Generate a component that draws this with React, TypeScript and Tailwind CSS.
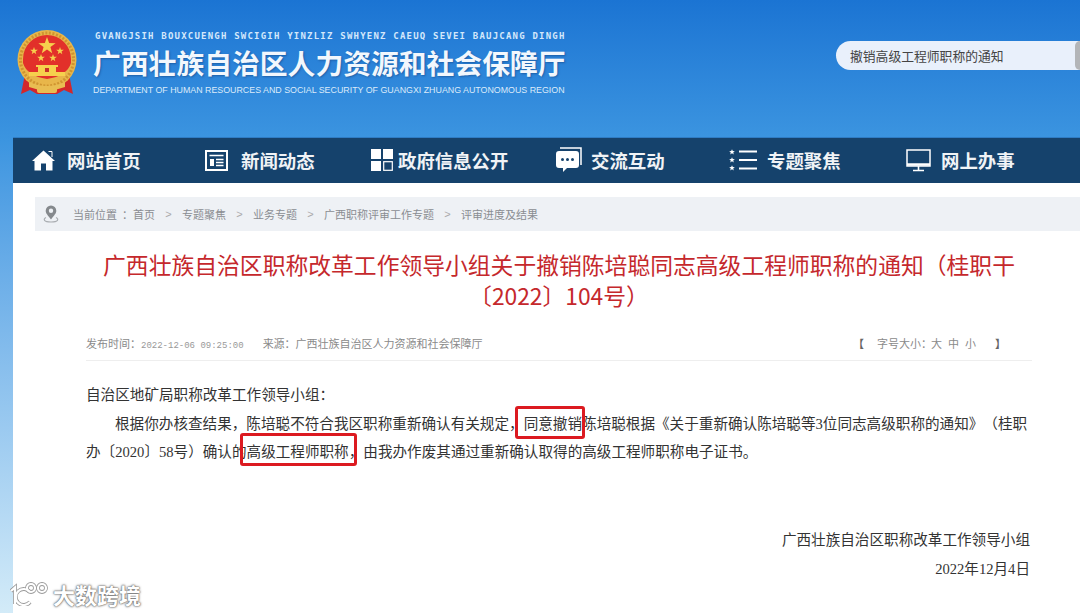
const cjk = "font-['Noto_Sans_CJK_SC','Liberation_Sans',sans-serif]";

function Emblem() {
  const star = "M0 -5 L1.2 -1.6 L4.8 -1.5 L1.9 0.6 L2.9 4 L0 2 L-2.9 4 L-1.9 0.6 L-4.8 -1.5 L-1.2 -1.6 Z";
  return (
    <svg width="64" height="67" viewBox="0 0 64 67" className="shrink-0 blur-[0.4px]">
      <path d="M10 44 L6 64 L15 60 L22 64 L42 64 L49 60 L58 64 L54 44 Z" fill="#d3272b" />
      <circle cx="32" cy="29.5" r="29.5" fill="#e8b64a" />
      <circle cx="32" cy="29.5" r="26.5" fill="none" stroke="#cf9430" strokeWidth="3" strokeDasharray="2 1.6" />
      <path d="M8 29 A24 24 0 0 1 56 29 L56 33 Q52 46 32 49 Q12 46 8 33 Z" fill="#e2302a" />
      <g fill="#f6d04d">
        <path d={star} transform="translate(32 16) scale(1.8)" />
        <path d={star} transform="translate(19 21) scale(0.8)" />
        <path d={star} transform="translate(45 21) scale(0.8)" />
        <path d={star} transform="translate(26 28) scale(0.8)" />
        <path d={star} transform="translate(38 28) scale(0.8)" />
        <rect x="21" y="35" width="22" height="2" />
        <rect x="23" y="37" width="18" height="5" />
        <rect x="14" y="42" width="36" height="4" />
      </g>
      <rect x="30" y="38" width="4" height="4" fill="#c8302a" />
      <path d="M14 52 Q32 60 50 52 L50 57 Q32 64 14 57 Z" fill="#e9bd52" />
      <rect x="22" y="57" width="20" height="6" rx="2" fill="#e9bd52" />
    </svg>
  );
}

function HomeIcon() {
  return (
    <svg width="23" height="21" viewBox="0 0 23 21" fill="#fff">
      <path d="M11.5 0.5 L23 11 L20.5 11 L20.5 20.5 L14 20.5 L14 13.5 L9 13.5 L9 20.5 L2.5 20.5 L2.5 11 L0 11 Z" />
      <path d="M16.5 1.5 H20 V7" fill="none" stroke="#fff" strokeWidth="1" />
    </svg>
  );
}

function NewsIcon() {
  return (
    <svg width="23" height="21" viewBox="0 0 23 21" fill="none" stroke="#fff">
      <rect x="1" y="1" width="21" height="19" strokeWidth="2" />
      <path d="M4.5 5.5H18.5M11 9.5H18.5M11 12.5H18.5M11 15.5H18.5" strokeWidth="1.6" />
      <rect x="5" y="9" width="4" height="7" fill="#fff" stroke="none" />
    </svg>
  );
}

function GridIcon() {
  return (
    <svg width="22" height="22" viewBox="0 0 22 22" fill="#fff">
      <rect x="0" y="0" width="10" height="10" />
      <rect x="12" y="0" width="10" height="10" />
      <rect x="0" y="12" width="10" height="10" />
      <rect x="12.7" y="12.7" width="8.6" height="8.6" fill="none" stroke="#fff" strokeWidth="1.2" />
    </svg>
  );
}

function ChatIcon() {
  return (
    <svg width="27" height="26" viewBox="0 0 27 26">
      <path d="M4 1 H25 V18" fill="none" stroke="#fff" strokeWidth="1.5" />
      <path d="M3 4 H20 Q23 4 23 7 V18 Q23 21 20 21 H11 L7 25 L7 21 H3 Q0 21 0 18 V7 Q0 4 3 4 Z" fill="#fff" />
      <circle cx="6.5" cy="12.5" r="1.5" fill="#15426c" />
      <circle cx="11.5" cy="12.5" r="1.5" fill="#15426c" />
      <circle cx="16.5" cy="12.5" r="1.5" fill="#15426c" />
    </svg>
  );
}

function ListIcon() {
  const star = "M0 -2.8 L0.8 -0.9 L2.8 -0.8 L1.2 0.5 L1.8 2.5 L0 1.3 L-1.8 2.5 L-1.2 0.5 L-2.8 -0.8 L-0.8 -0.9 Z";
  return (
    <svg width="28" height="22" viewBox="0 0 28 22" fill="#fff">
      <path d={star} transform="translate(3 3)" />
      <path d={star} transform="translate(3 11)" />
      <path d={star} transform="translate(3 19)" />
      <rect x="10" y="1.5" width="18" height="2" />
      <rect x="10" y="10" width="18" height="2" />
      <rect x="10" y="18.5" width="18" height="2" />
    </svg>
  );
}

function MonitorIcon() {
  return (
    <svg width="25" height="23" viewBox="0 0 25 23" fill="none" stroke="#fff">
      <rect x="1" y="1" width="23" height="16" strokeWidth="1.5" />
      <path d="M1 15.5H24" strokeWidth="2.5" />
      <path d="M12.5 17V21M7 21.5H18" strokeWidth="1.6" />
    </svg>
  );
}

function PinIcon() {
  return (
    <svg width="16" height="18" viewBox="0 0 16 18" fill="none" className="shrink-0">
      <path d="M3 12.5 C0 14 0.5 17 8 17 C15.5 17 16 14 13 12.5" stroke="#a9adb1" strokeWidth="1.2" />
      <path d="M8 14.5 C5 10.5 2.7 8.5 2.7 5.8 A5.3 5.3 0 0 1 13.3 5.8 C13.3 8.5 11 10.5 8 14.5 Z M8 3.6 A2.2 2.2 0 1 0 8 8 A2.2 2.2 0 1 0 8 3.6 Z" fill="#85898d" fillRule="evenodd" />
    </svg>
  );
}

function WatermarkLogo() {
  const shapes = (
    <>
      <path d="M1 9 L5 5.5 V22" />
      <path d="M20 10 A8 8 0 1 0 20 20" />
      <circle cx="21" cy="6" r="4" />
      <circle cx="32" cy="6" r="4" />
    </>
  );
  return (
    <svg width="40" height="24" viewBox="0 0 40 24" fill="none">
      <g stroke="#9a9a9a" strokeWidth="3.8">{shapes}</g>
      <g stroke="#fff" strokeWidth="2.2">{shapes}</g>
    </svg>
  );
}

const navItems = [
  { label: "网站首页", width: "w-[173px]", gap: "gap-[12px]", icon: <HomeIcon /> },
  { label: "新闻动态", width: "w-[166px]", gap: "gap-[13px]", icon: <NewsIcon /> },
  { label: "政府信息公开", width: "w-[185px]", gap: "gap-[5px]", icon: <GridIcon /> },
  { label: "交流互动", width: "w-[173px]", gap: "gap-[8px]", icon: <ChatIcon /> },
  { label: "专题聚焦", width: "w-[177px]", gap: "gap-[10px]", icon: <ListIcon /> },
  { label: "网上办事", width: "w-[140px]", gap: "gap-[10px]", icon: <MonitorIcon /> },
];

const crumbs = ["专题聚焦", "业务专题", "广西职称评审工作专题", "评审进度及结果"];

function Mark({ className, children }: { className: string; children: React.ReactNode }) {
  return (
    <span className="relative">
      {children}
      <span className={`absolute rounded-[3px] border-[3px] border-[#dc1a20] ${className}`} />
    </span>
  );
}

export default function App() {
  return (
    <div className={`relative h-[613px] w-[1080px] overflow-hidden bg-gradient-to-b from-[#1b74d3] via-[#3c95e0] via-[23%] to-[#d3ebf8] [text-spacing-trim:space-all] ${cjk}`}>
      <header className="flex h-[137px] items-start">
        <div className="ml-[15px] mt-[30px]">
          <Emblem />
        </div>
        <div className="ml-[14px] mt-[30px] flex w-[480px] flex-col">
          <p className="ml-[2px] whitespace-nowrap font-['DejaVu_Sans_Mono',monospace] text-[9px] leading-[12px] font-bold tracking-[1.21px] text-[#d4e8fb]">
            GVANGJSIH BOUXCUENGH SWCIGIH YINZLIZ SWHYENZ CAEUQ SEVEI BAUJCANG DINGH
          </p>
          <h1 className="mt-[2px] text-[27.8px] leading-[36px] font-bold whitespace-nowrap text-[#f2f7fd] [text-shadow:1px_1px_2px_rgba(0,30,80,0.35)]">
            广西壮族自治区人力资源和社会保障厅
          </h1>
          <p className="mt-[4px] font-['Liberation_Sans',sans-serif] text-[8.86px] leading-[12px] whitespace-nowrap text-[#dcebfa]">
            DEPARTMENT OF HUMAN RESOURCES AND SOCIAL SECURITY OF GUANGXI ZHUANG AUTONOMOUS REGION
          </p>
        </div>
        <div className="mt-[41px] ml-auto flex h-[29px] w-[244px] items-center justify-between rounded-l-full bg-[#e9f0fb] pl-[14px]">
          <span className="text-[12.8px] text-[#444]">撤销高级工程师职称的通知</span>
          <span className="h-[29px] w-[5px] rounded-l-full bg-[#b3b5b8]" />
        </div>
      </header>

      <main className="ml-[13px] h-[476px] bg-white">
        <nav className="flex h-[46px] items-center border-t border-[#2f7cc4] bg-[#15426c] pl-[19px]">
          {navItems.map((item) => (
            <div key={item.label} className={`flex items-center ${item.width} ${item.gap}`}>
              {item.icon}
              <span className="text-[18.4px] font-bold text-[#f0f3f6]">{item.label}</span>
            </div>
          ))}
        </nav>

        <div className="ml-[22px] mt-[14px] flex h-[34px] items-center bg-[#eef1f5] pl-[8px] text-[11px] text-[#8a8d92]">
          <PinIcon />
          <span className="ml-[14px]">当前位置&nbsp;&nbsp;：首页</span>
          {crumbs.map((c) => (
            <span key={c} className="flex items-center">
              <span className="mx-[10.3px] font-['Liberation_Sans',sans-serif] text-[#aaa]">&gt;</span>
              <span>{c}</span>
            </span>
          ))}
        </div>

        <div className="mx-[73px] mr-[48px]">
          <h2 className="mt-[19px] text-center text-[22.8px] leading-[30.5px] text-[#c5282c]">
            广西壮族自治区职称改革工作领导小组关于撤销陈培聪同志高级工程师职称的通知（桂职干〔2022〕104号）
          </h2>

          <div className="mt-[24px] flex h-[26px] items-start justify-between border-b border-[#eee] text-[11px] leading-[16px] text-[#8a8a8a]">
            <span>
              发布时间：<span className="font-['Liberation_Mono',monospace] text-[9px] text-[#999]">2022-12-06 09:25:00</span>
              <span className="ml-[19px]">来源：广西壮族自治区人力资源和社会保障厅</span>
            </span>
            <span className="mr-[26px] flex gap-[6px]">
              <span className="mr-[7px] font-bold text-[#666]">【</span>
              <span className="-mr-[7px]">字号大小：</span>
              <span>大</span>
              <span>中</span>
              <span>小</span>
              <span className="ml-[13px] font-bold text-[#666]">】</span>
            </span>
          </div>

          <div className="mt-[20px] font-['Liberation_Serif','Noto_Sans_CJK_SC',serif] text-[14.6px] leading-[28.5px] text-[#333]">
            <p>自治区地矿局职称改革工作领导小组：</p>
            <p className="indent-[29px]">
              根据你办核查结果，陈培聪不符合我区职称重新确认有关规定，
              <Mark className="-top-[10px] -bottom-[7px] -left-[9px] -right-[3px]">同意撤销</Mark>
              陈培聪根据《关于重新确认陈培聪等3位同志高级职称的通知》（桂职办〔2020〕58号）确认的
              <Mark className="-top-[11px] -bottom-[6px] -left-[7px] right-[6px]">高级工程师职称，</Mark>
              由我办作废其通过重新确认取得的高级工程师职称电子证书。
            </p>
          </div>

          <div className="mt-[59px] mr-[2px] text-right font-['Liberation_Serif','Noto_Sans_CJK_SC',serif] text-[14.6px] leading-[29px] text-[#333]">
            <p>广西壮族自治区职称改革工作领导小组</p>
            <p>2022年12月4日</p>
          </div>
        </div>
      </main>

      <div className="absolute bottom-[7px] left-[10px] flex items-center gap-[3px] text-[#fff] [text-shadow:0_0_2px_#666,0_0_1px_#666,0_0_3px_#999]">
        <WatermarkLogo />
        <span className="text-[22px] leading-[24px] font-bold">大数跨境</span>
      </div>
    </div>
  );
}
